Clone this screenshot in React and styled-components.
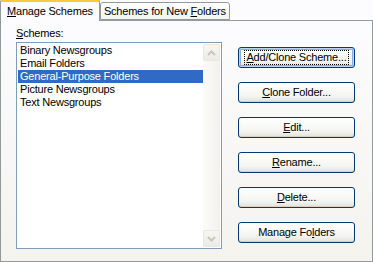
import React from "react";
import styled, { createGlobalStyle } from "styled-components";

const Global = createGlobalStyle`
  html, body { margin: 0; padding: 0; background: #fcfcfe; }
  body { font-family: Tahoma, "Liberation Sans", Arial, sans-serif; font-size: 11px; letter-spacing: -0.2px; color: #000; }
`;

const Frame = styled.div`
  width: 373px;
  height: 262px;
  display: flex;
  flex-direction: column;
  background: #fcfcfe;
`;

const TabRow = styled.div`
  display: flex;
  align-items: flex-end;
  height: 20px;
  position: relative;
  z-index: 1;
`;

const Tab = styled.div`
  box-sizing: border-box;
  height: ${(p) => (p.$active ? "22px" : "18px")};
  margin-bottom: ${(p) => (p.$active ? "-1px" : "0")};
  padding: ${(p) => (p.$active ? "3px 6px 0 6px" : "2px 3px 0 3px")};
  border: 1px solid #919b9c;
  border-bottom: ${(p) => (p.$active ? "none" : "1px solid #919b9c")};
  border-top: ${(p) => (p.$active ? "3px solid #ffc83c" : "1px solid #919b9c")};
  border-radius: 3px 3px 0 0;
  background: ${(p) => (p.$active ? "#fcfcfe" : "linear-gradient(#ffffff, #f3f3ef)")};
  white-space: nowrap;
  line-height: 13px;
`;

const Panel = styled.div`
  box-sizing: border-box;
  width: 373px;
  height: 242px;
  border: 1px solid #919b9c;
  background: linear-gradient(#fcfcfe, #f4f3ee);
  display: flex;
  padding: 6px 16px 0 15px;
  gap: 16px;
`;

const LeftCol = styled.div`
  display: flex;
  flex-direction: column;
  width: 206px;
`;

const Label = styled.div`
  height: 15px;
  line-height: 13px;
`;

const ListBox = styled.div`
  box-sizing: border-box;
  height: 207px;
  border: 1px solid #7f9db9;
  background: #fff;
  display: flex;
  padding: 1px;
`;

const Items = styled.div`
  flex: 1;
  display: flex;
  flex-direction: column;
`;

const Item = styled.div`
  height: 13px;
  line-height: 13px;
  padding-left: 2px;
  white-space: nowrap;
  background: ${(p) => (p.$selected ? "#316ac5" : "transparent")};
  color: ${(p) => (p.$selected ? "#fff" : "#000")};
`;

const ScrollBar = styled.div`
  width: 17px;
  display: flex;
  flex-direction: column;
  justify-content: space-between;
  background: linear-gradient(90deg, #fbfbf8, #f3f1ec);
`;

const ScrollBtn = styled.div`
  box-sizing: border-box;
  height: 17px;
  border: 1px solid #e8e7e0;
  border-radius: 2px;
  background: linear-gradient(#f7f6f2, #ecebe5);
  display: flex;
  align-items: center;
  justify-content: center;
`;

const RightCol = styled.div`
  display: flex;
  flex-direction: column;
  padding-top: 20px;
  gap: 14px;
`;

const Button = styled.div`
  box-sizing: border-box;
  width: 117px;
  height: 21px;
  border: 1px solid #003c74;
  border-radius: 3px;
  background: linear-gradient(#ffffff 0%, #f4f4f0 70%, #e3e1d8 100%);
  display: flex;
  align-items: center;
  justify-content: center;
  white-space: nowrap;
  box-shadow: ${(p) =>
    p.$default ? "inset 0 0 0 1px #bcd4f6, inset 0 0 0 2px #89ade4" : "inset 0 -1px 0 #d6d0c5"};
`;

const FocusRect = styled.span`
  padding: 0 1px;
  outline: ${(p) => (p.$on ? "1px dotted #000" : "none")};
  line-height: 13px;
`;

const U = styled.span`
  text-decoration: underline;
`;

const Chevron = ({ up }) => (
  <svg width="9" height="6" viewBox="0 0 9 6">
    <path
      d={up ? "M1 5 L4.5 1.5 L8 5" : "M1 1 L4.5 4.5 L8 1"}
      fill="none"
      stroke="#c9c7ba"
      strokeWidth="2"
    />
  </svg>
);

const items = [
  "Binary Newsgroups",
  "Email Folders",
  "General-Purpose Folders",
  "Picture Newsgroups",
  "Text Newsgroups",
];

const buttons = [
  { pre: "", key: "A", post: "dd/Clone Scheme...", def: true },
  { pre: "", key: "C", post: "lone Folder..." },
  { pre: "", key: "E", post: "dit..." },
  { pre: "", key: "R", post: "ename..." },
  { pre: "", key: "D", post: "elete..." },
  { pre: "Manage Fo", key: "l", post: "ders" },
];

export default function App() {
  return (
    <Frame>
      <Global />
      <TabRow>
        <Tab $active>
          <U>M</U>anage Schemes
        </Tab>
        <Tab>
          Schemes for New <U>F</U>olders
        </Tab>
      </TabRow>
      <Panel>
        <LeftCol>
          <Label>
            <U>S</U>chemes:
          </Label>
          <ListBox>
            <Items>
              {items.map((t, i) => (
                <Item key={t} $selected={i === 2}>
                  {t}
                </Item>
              ))}
            </Items>
            <ScrollBar>
              <ScrollBtn>
                <Chevron up />
              </ScrollBtn>
              <ScrollBtn>
                <Chevron />
              </ScrollBtn>
            </ScrollBar>
          </ListBox>
        </LeftCol>
        <RightCol>
          {buttons.map((b) => (
            <Button key={b.post} $default={b.def}>
              <FocusRect $on={b.def}>
                {b.pre}
                <U>{b.key}</U>
                {b.post}
              </FocusRect>
            </Button>
          ))}
        </RightCol>
      </Panel>
    </Frame>
  );
}
